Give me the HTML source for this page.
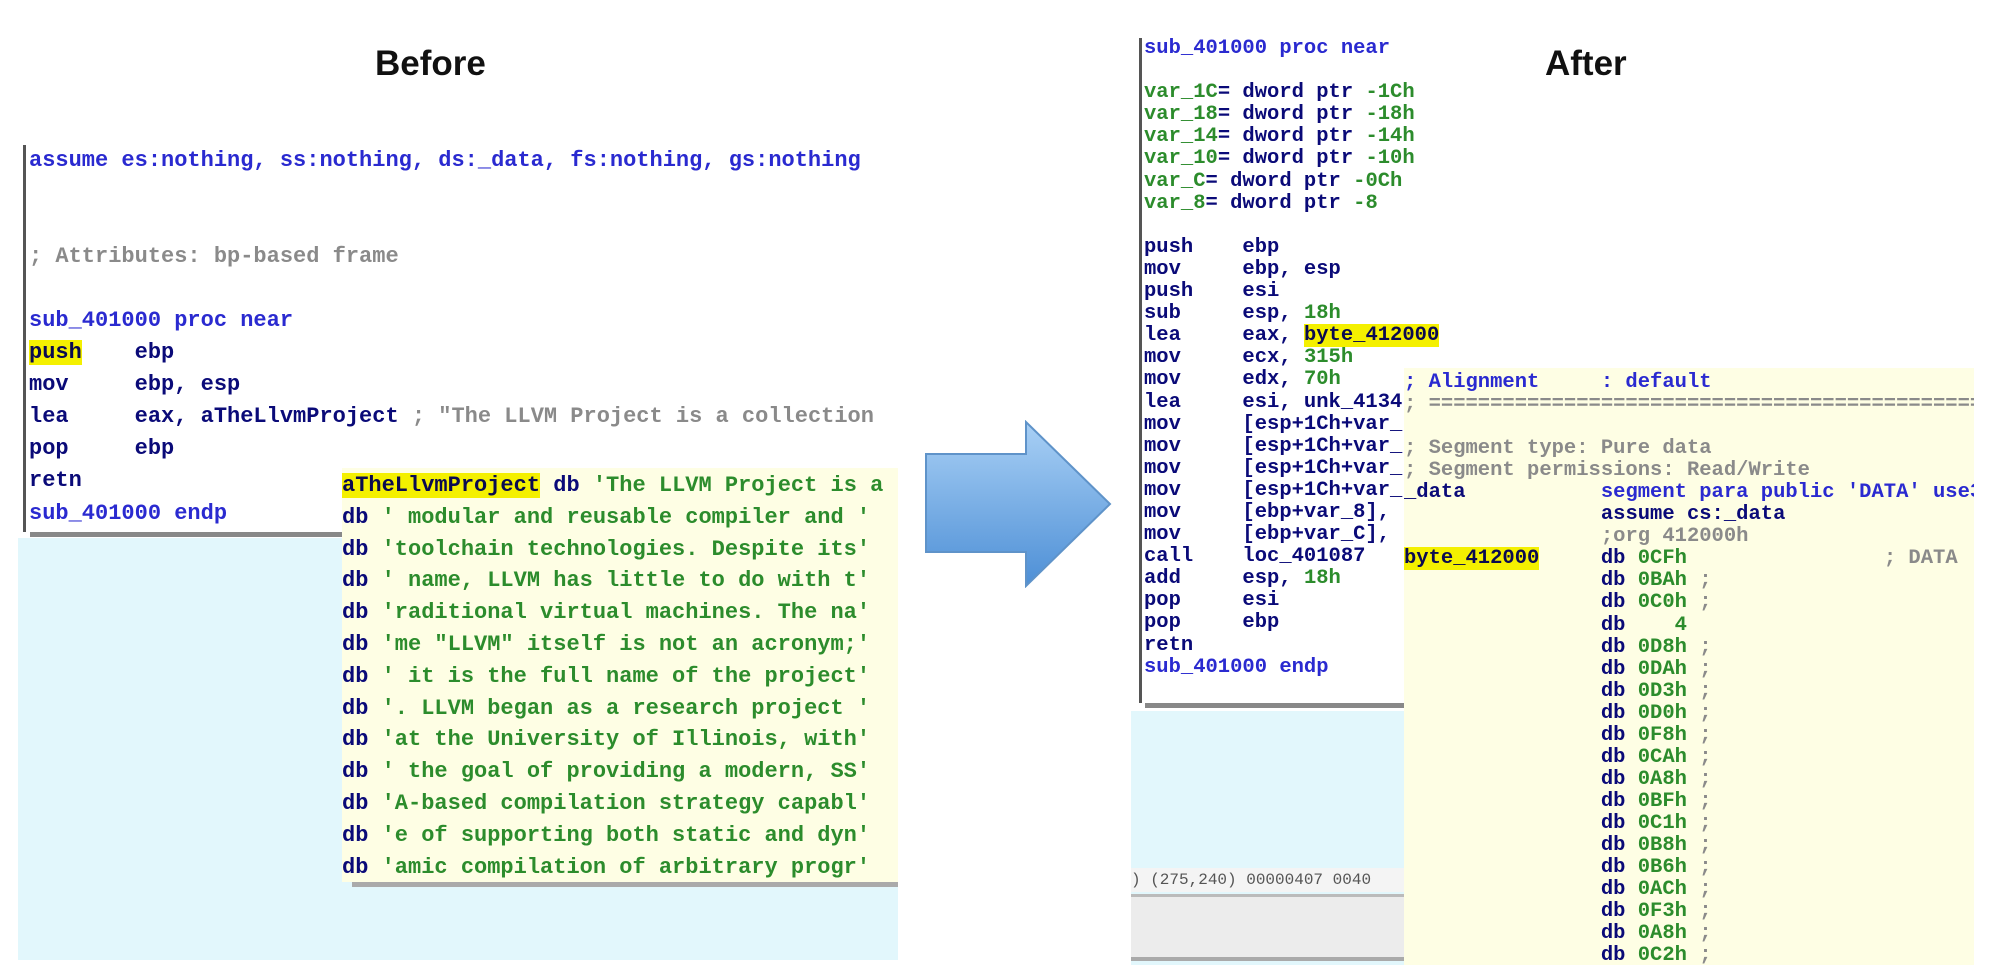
<!DOCTYPE html>
<html><head><meta charset="utf-8"><style>
body{margin:0;width:2000px;height:965px;background:#fff;position:relative;overflow:hidden;font-family:"Liberation Sans",sans-serif}
.abs{position:absolute}
pre{margin:0;font-family:"Liberation Mono",monospace;font-weight:bold;white-space:pre}
.t{font-size:35px;font-weight:bold;color:#111}
.b{color:#2a2ad0}.n{color:#0a0a78}.g{color:#2c8c2c}.c{color:#8a8a8a}.hl{background:#f4f000;color:#0a0a50}
</style></head><body>
<div class="abs t" style="left:375px;top:44px">Before</div>
<div class="abs t" style="left:1545px;top:44px">After</div>

<!-- left -->
<div class="abs" style="left:18px;top:538px;width:880px;height:422px;background:#e2f7fc"></div>
<div class="abs" style="left:23px;top:145px;width:875px;height:387px;background:#fff;border-left:3px solid #555;overflow:hidden">
<pre style="position:absolute;left:3px;top:0;font-size:22px;line-height:32.05px"><span class="b">assume es:nothing, ss:nothing, ds:_data, fs:nothing, gs:nothing</span>


<span class="c">; Attributes: bp-based frame</span>

<span class="b">sub_401000 proc near</span>
<span class="hl">push</span><span class="n">    ebp</span>
<span class="n">mov     ebp, esp</span>
<span class="n">lea     eax, aTheLlvmProject</span> <span class="c">; "The LLVM Project is a collection</span>
<span class="n">pop     ebp</span>
<span class="n">retn</span>
<span class="b">sub_401000 endp</span></pre>
</div>
<div class="abs" style="left:30px;top:532px;width:320px;height:5px;background:#888"></div>
<div class="abs" style="left:342px;top:468px;width:556px;height:414px;background:#fefee4;overflow:hidden">
<pre style="position:absolute;left:0;top:2px;font-size:22px;line-height:31.8px"><span class="hl">aTheLlvmProject</span><span class="n"> db </span><span class="g">'The LLVM Project is a</span>
<span class="n">db </span><span class="g">' modular and reusable compiler and '</span>
<span class="n">db </span><span class="g">'toolchain technologies. Despite its'</span>
<span class="n">db </span><span class="g">' name, LLVM has little to do with t'</span>
<span class="n">db </span><span class="g">'raditional virtual machines. The na'</span>
<span class="n">db </span><span class="g">'me "LLVM" itself is not an acronym;'</span>
<span class="n">db </span><span class="g">' it is the full name of the project'</span>
<span class="n">db </span><span class="g">'. LLVM began as a research project '</span>
<span class="n">db </span><span class="g">'at the University of Illinois, with'</span>
<span class="n">db </span><span class="g">' the goal of providing a modern, SS'</span>
<span class="n">db </span><span class="g">'A-based compilation strategy capabl'</span>
<span class="n">db </span><span class="g">'e of supporting both static and dyn'</span>
<span class="n">db </span><span class="g">'amic compilation of arbitrary progr'</span></pre>
</div>
<div class="abs" style="left:352px;top:882px;width:546px;height:5px;background:#aaa"></div>

<!-- arrow -->
<svg class="abs" style="left:924px;top:420px" width="190" height="168" viewBox="0 0 190 168">
<defs><linearGradient id="ag" x1="0" y1="0" x2="0" y2="1"><stop offset="0" stop-color="#a9d0f5"/><stop offset="1" stop-color="#4d8fd6"/></linearGradient></defs>
<path d="M2 34 H102 V2 L186 84 L102 166 V132 H2 Z" fill="url(#ag)" stroke="#5f93c9" stroke-width="2"/>
</svg>

<!-- right -->
<div class="abs" style="left:1131px;top:711px;width:280px;height:254px;background:#e2f7fc"></div>
<div class="abs" style="left:1131px;top:868px;width:280px;height:24px;background:#f4f4f4;font-family:'Liberation Mono',monospace;font-size:16px;color:#555;line-height:24px;white-space:pre">) (275,240) 00000407 0040</div>
<div class="abs" style="left:1131px;top:894px;width:280px;height:3px;background:#bbb"></div>
<div class="abs" style="left:1131px;top:897px;width:280px;height:60px;background:#ececec"></div>
<div class="abs" style="left:1131px;top:957px;width:280px;height:4px;background:#aaa"></div>
<div class="abs" style="left:1139px;top:38px;width:340px;height:665px;background:#fff;border-left:3px solid #555;overflow:hidden">
<pre style="position:absolute;left:2px;top:0;font-size:20.5px;line-height:22.1px"><span class="b">sub_401000 proc near</span>

<span class="g">var_1C</span><span class="n">= dword ptr </span><span class="g">-1Ch</span>
<span class="g">var_18</span><span class="n">= dword ptr </span><span class="g">-18h</span>
<span class="g">var_14</span><span class="n">= dword ptr </span><span class="g">-14h</span>
<span class="g">var_10</span><span class="n">= dword ptr </span><span class="g">-10h</span>
<span class="g">var_C</span><span class="n">= dword ptr </span><span class="g">-0Ch</span>
<span class="g">var_8</span><span class="n">= dword ptr </span><span class="g">-8</span>

<span class="n">push    ebp
mov     ebp, esp
push    esi
sub     esp, </span><span class="g">18h</span>
<span class="n">lea     eax, </span><span class="hl">byte_412000</span>
<span class="n">mov     ecx, </span><span class="g">315h</span>
<span class="n">mov     edx, </span><span class="g">70h</span>
<span class="n">lea     esi, unk_4134
mov     [esp+1Ch+var_
mov     [esp+1Ch+var_
mov     [esp+1Ch+var_
mov     [esp+1Ch+var_
mov     [ebp+var_8],
mov     [ebp+var_C],
call    loc_401087
add     esp, </span><span class="g">18h</span>
<span class="n">pop     esi
pop     ebp
retn</span>
<span class="b">sub_401000 endp</span></pre>
</div>
<div class="abs" style="left:1145px;top:703px;width:265px;height:5px;background:#888"></div>
<div class="abs" style="left:1404px;top:368px;width:570px;height:597px;background:#fefee4;overflow:hidden">
<pre style="position:absolute;left:0;top:4px;font-size:20.5px;line-height:22.05px"><span class="b">; Alignment     : default</span>
<span class="c">; ===========================================================</span>

<span class="c">; Segment type: Pure data</span>
<span class="c">; Segment permissions: Read/Write</span>
<span class="n">_data</span>           <span class="b">segment para public 'DATA' use32</span>
                <span class="n">assume cs:_data</span>
                <span class="c">;org 412000h</span>
<span class="hl">byte_412000</span>     <span class="n">db </span><span class="g">0CFh</span>                <span class="c">; DATA</span>
                <span class="n">db </span><span class="g">0BAh</span> <span class="c">;</span>
                <span class="n">db </span><span class="g">0C0h</span> <span class="c">;</span>
                <span class="n">db </span><span class="g">   4</span>
                <span class="n">db </span><span class="g">0D8h</span> <span class="c">;</span>
                <span class="n">db </span><span class="g">0DAh</span> <span class="c">;</span>
                <span class="n">db </span><span class="g">0D3h</span> <span class="c">;</span>
                <span class="n">db </span><span class="g">0D0h</span> <span class="c">;</span>
                <span class="n">db </span><span class="g">0F8h</span> <span class="c">;</span>
                <span class="n">db </span><span class="g">0CAh</span> <span class="c">;</span>
                <span class="n">db </span><span class="g">0A8h</span> <span class="c">;</span>
                <span class="n">db </span><span class="g">0BFh</span> <span class="c">;</span>
                <span class="n">db </span><span class="g">0C1h</span> <span class="c">;</span>
                <span class="n">db </span><span class="g">0B8h</span> <span class="c">;</span>
                <span class="n">db </span><span class="g">0B6h</span> <span class="c">;</span>
                <span class="n">db </span><span class="g">0ACh</span> <span class="c">;</span>
                <span class="n">db </span><span class="g">0F3h</span> <span class="c">;</span>
                <span class="n">db </span><span class="g">0A8h</span> <span class="c">;</span>
                <span class="n">db </span><span class="g">0C2h</span> <span class="c">;</span></pre>
</div>
</body></html>
